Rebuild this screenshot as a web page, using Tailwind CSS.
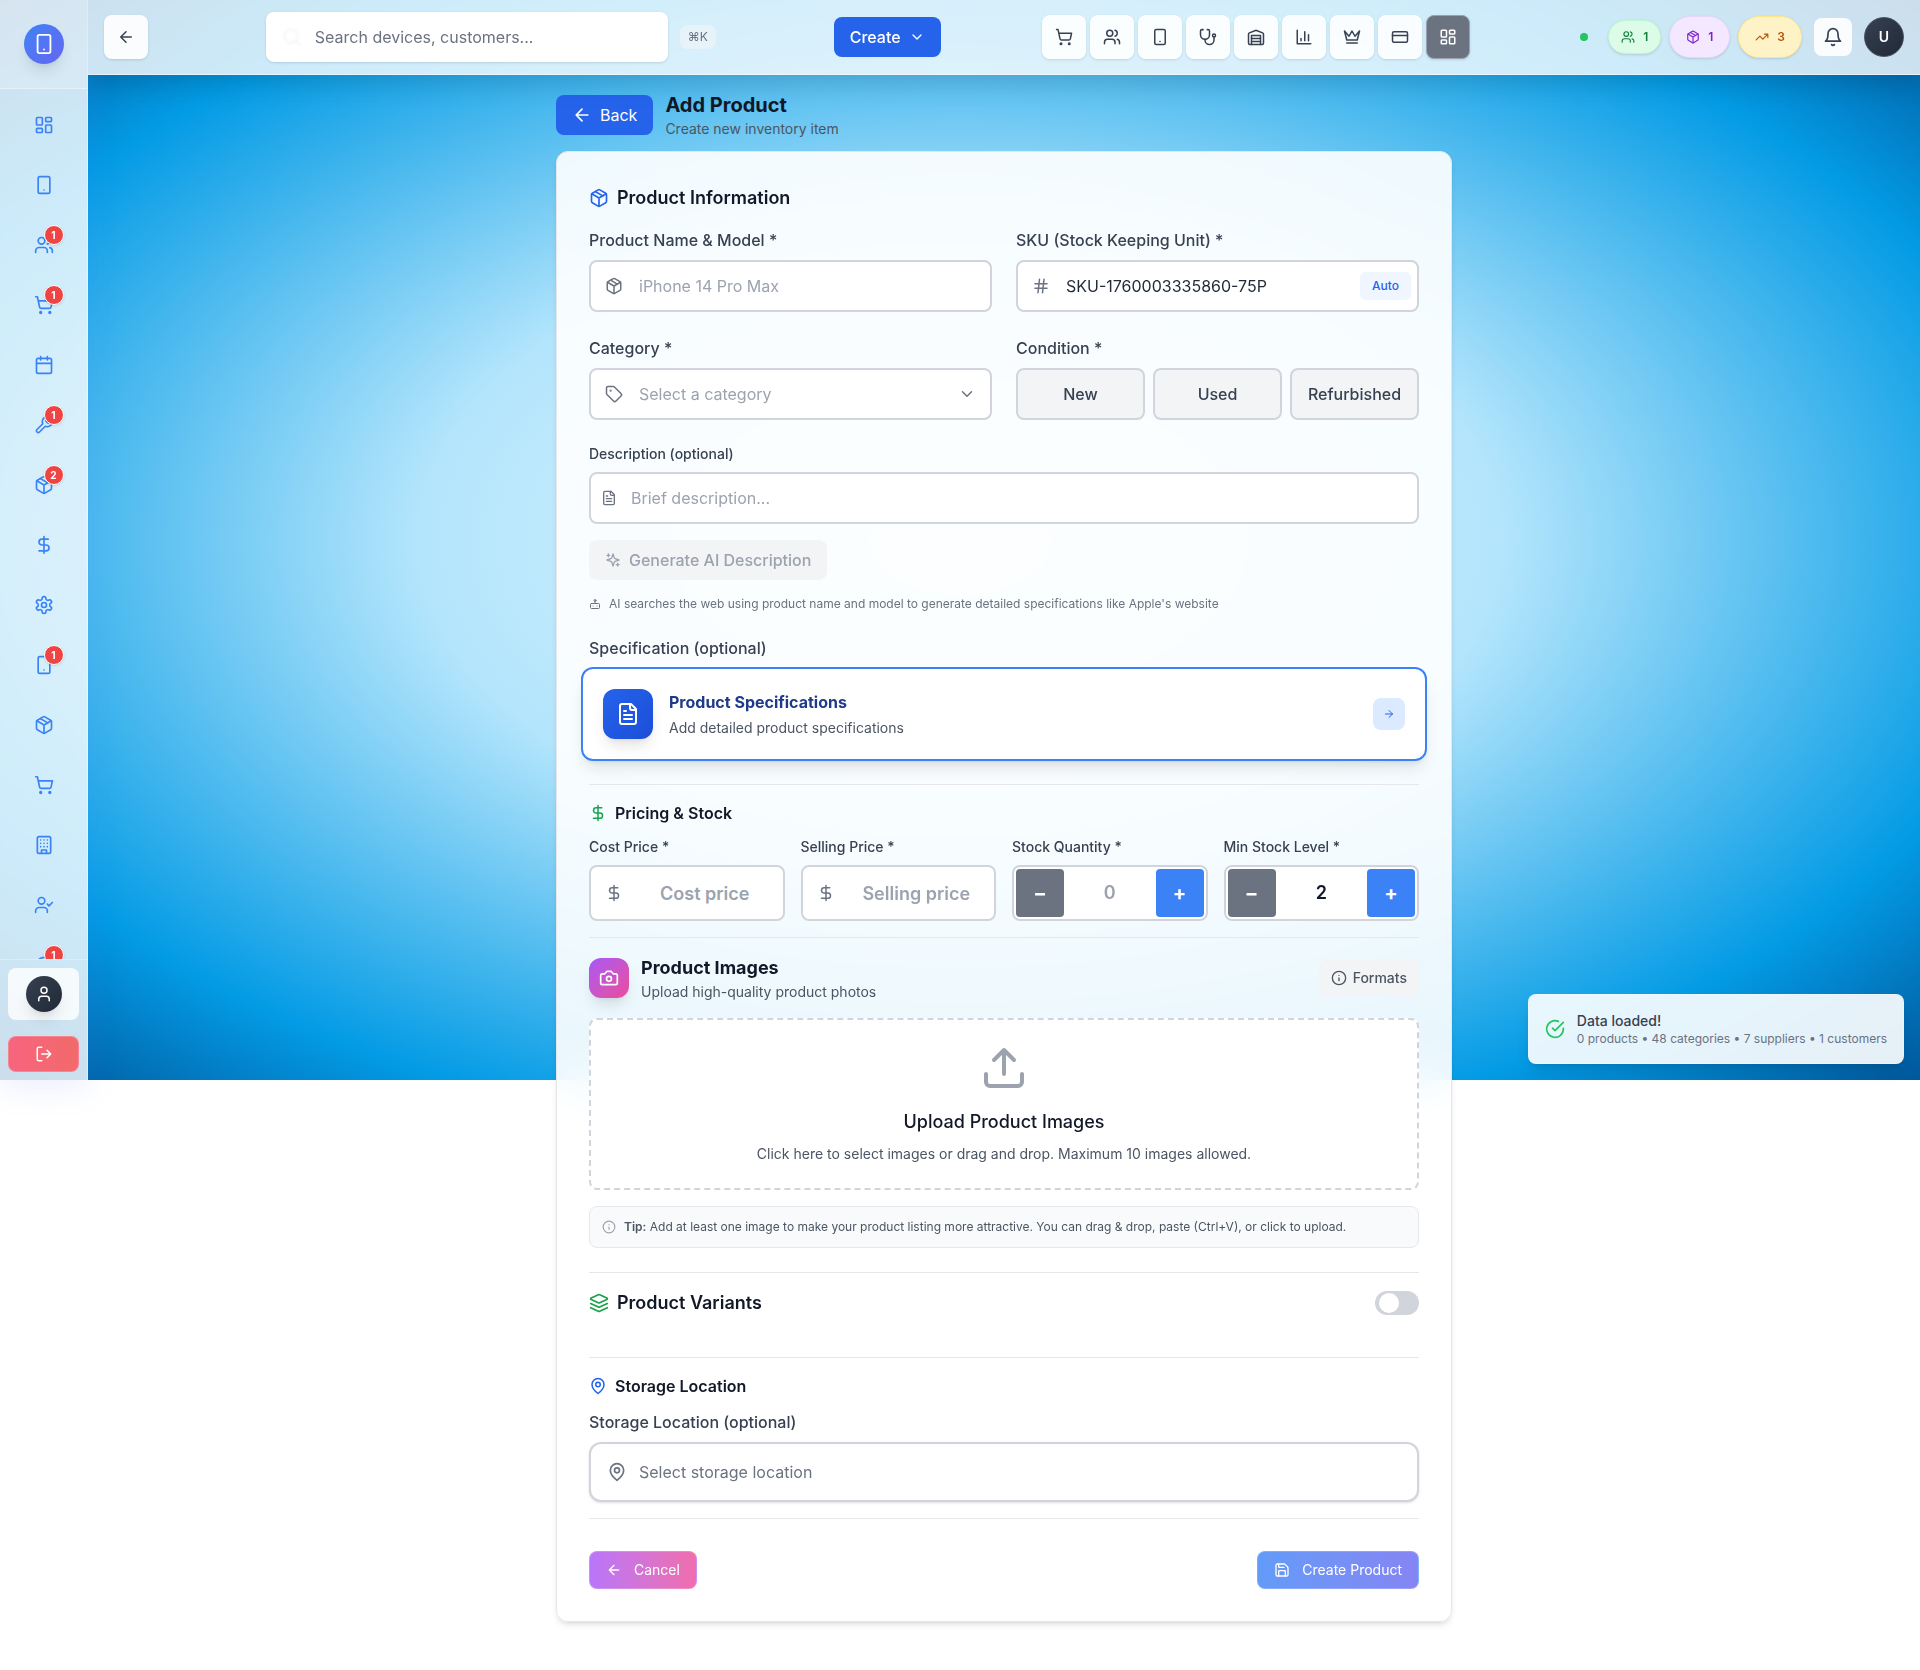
<!DOCTYPE html>
<html lang="en">
<head>
<meta charset="utf-8">
<meta name="viewport" content="width=device-width, initial-scale=1">
<title>Add Product</title>
<script src="https://cdn.jsdelivr.net/npm/@tailwindcss/browser@4"></script>
</head>
<body class="relative bg-white font-['Inter',sans-serif] text-[#111827]">

<!-- Icon sprite -->
<svg class="hidden" fill="none" stroke="currentColor" stroke-width="2" stroke-linecap="round" stroke-linejoin="round">
  <symbol id="phone" viewBox="0 0 24 24"><rect x="5" y="2" width="14" height="20" rx="2"/><path d="M12 18h.01"/></symbol>
  <symbol id="dash" viewBox="0 0 24 24"><rect x="3" y="3" width="7" height="9" rx="1"/><rect x="14" y="3" width="7" height="5" rx="1"/><rect x="14" y="12" width="7" height="9" rx="1"/><rect x="3" y="16" width="7" height="5" rx="1"/></symbol>
  <symbol id="users" viewBox="0 0 24 24"><path d="M16 21v-2a4 4 0 0 0-4-4H6a4 4 0 0 0-4 4v2"/><circle cx="9" cy="7" r="4"/><path d="M22 21v-2a4 4 0 0 0-3-3.87M16 3.13a4 4 0 0 1 0 7.75"/></symbol>
  <symbol id="cart" viewBox="0 0 24 24"><circle cx="8" cy="21" r="1"/><circle cx="19" cy="21" r="1"/><path d="M2.05 2.05h2l2.66 12.42a2 2 0 0 0 2 1.58h9.78a2 2 0 0 0 1.95-1.57l1.65-7.43H5.12"/></symbol>
  <symbol id="calendar" viewBox="0 0 24 24"><path d="M8 2v4M16 2v4"/><rect x="3" y="4" width="18" height="18" rx="2"/><path d="M3 10h18"/></symbol>
  <symbol id="wrench" viewBox="0 0 24 24"><path d="M14.7 6.3a1 1 0 0 0 0 1.4l1.6 1.6a1 1 0 0 0 1.4 0l3.77-3.77a6 6 0 0 1-7.94 7.94l-6.91 6.91a2.12 2.12 0 0 1-3-3l6.91-6.91a6 6 0 0 1 7.94-7.94l-3.76 3.76z"/></symbol>
  <symbol id="package" viewBox="0 0 24 24"><path d="m7.5 4.27 9 5.15"/><path d="M21 8a2 2 0 0 0-1-1.73l-7-4a2 2 0 0 0-2 0l-7 4A2 2 0 0 0 3 8v8a2 2 0 0 0 1 1.73l7 4a2 2 0 0 0 2 0l7-4A2 2 0 0 0 21 16Z"/><path d="m3.3 7 8.7 5 8.7-5M12 22V12"/></symbol>
  <symbol id="dollar" viewBox="0 0 24 24"><path d="M12 2v20M17 5H9.5a3.5 3.5 0 0 0 0 7h5a3.5 3.5 0 0 1 0 7H6"/></symbol>
  <symbol id="gear" viewBox="0 0 24 24"><path d="M12.22 2h-.44a2 2 0 0 0-2 2v.18a2 2 0 0 1-1 1.73l-.43.25a2 2 0 0 1-2 0l-.15-.08a2 2 0 0 0-2.73.73l-.22.38a2 2 0 0 0 .73 2.73l.15.1a2 2 0 0 1 1 1.72v.51a2 2 0 0 1-1 1.74l-.15.09a2 2 0 0 0-.73 2.73l.22.38a2 2 0 0 0 2.73.73l.15-.08a2 2 0 0 1 2 0l.43.25a2 2 0 0 1 1 1.73V20a2 2 0 0 0 2 2h.44a2 2 0 0 0 2-2v-.18a2 2 0 0 1 1-1.73l.43-.25a2 2 0 0 1 2 0l.15.08a2 2 0 0 0 2.73-.73l.22-.39a2 2 0 0 0-.73-2.73l-.15-.08a2 2 0 0 1-1-1.74v-.5a2 2 0 0 1 1-1.74l.15-.09a2 2 0 0 0 .73-2.73l-.22-.38a2 2 0 0 0-2.73-.73l-.15.08a2 2 0 0 1-2 0l-.43-.25a2 2 0 0 1-1-1.73V4a2 2 0 0 0-2-2z"/><circle cx="12" cy="12" r="3"/></symbol>
  <symbol id="building" viewBox="0 0 24 24"><rect x="4" y="2" width="16" height="20" rx="2"/><path d="M9 22v-4h6v4M8 6h.01M16 6h.01M12 6h.01M12 10h.01M12 14h.01M16 10h.01M16 14h.01M8 10h.01M8 14h.01"/></symbol>
  <symbol id="usercheck" viewBox="0 0 24 24"><path d="M16 21v-2a4 4 0 0 0-4-4H6a4 4 0 0 0-4 4v2"/><circle cx="9" cy="7" r="4"/><path d="m16 11 2 2 4-4"/></symbol>
  <symbol id="chat" viewBox="0 0 24 24"><path d="M7.9 20A9 9 0 1 0 4 16.1L2 22Z"/></symbol>
  <symbol id="user" viewBox="0 0 24 24"><path d="M19 21v-2a4 4 0 0 0-4-4H9a4 4 0 0 0-4 4v2"/><circle cx="12" cy="7" r="4"/></symbol>
  <symbol id="logout" viewBox="0 0 24 24"><path d="M9 21H5a2 2 0 0 1-2-2V5a2 2 0 0 1 2-2h4M16 17l5-5-5-5M21 12H9"/></symbol>
  <symbol id="left" viewBox="0 0 24 24"><path d="m12 19-7-7 7-7M19 12H5"/></symbol>
  <symbol id="right" viewBox="0 0 24 24"><path d="M5 12h14M12 5l7 7-7 7"/></symbol>
  <symbol id="down" viewBox="0 0 24 24"><path d="m6 9 6 6 6-6"/></symbol>
  <symbol id="search" viewBox="0 0 24 24"><circle cx="11" cy="11" r="8"/><path d="m21 21-4.3-4.3"/></symbol>
  <symbol id="steth" viewBox="0 0 24 24"><path d="M4.8 2.3A.3.3 0 1 0 5 2H4a2 2 0 0 0-2 2v5a6 6 0 0 0 6 6 6 6 0 0 0 6-6V4a2 2 0 0 0-2-2h-1a.2.2 0 1 0 .3.3"/><path d="M8 15v1a6 6 0 0 0 6 6 6 6 0 0 0 6-6v-4"/><circle cx="20" cy="10" r="2"/></symbol>
  <symbol id="warehouse" viewBox="0 0 24 24"><path d="M22 8.35V20a2 2 0 0 1-2 2H4a2 2 0 0 1-2-2V8.35A2 2 0 0 1 3.26 6.5l8-3.2a2 2 0 0 1 1.48 0l8 3.2A2 2 0 0 1 22 8.35ZM6 18h12M6 14h12"/><path d="M6 22V10h12v12"/></symbol>
  <symbol id="chart" viewBox="0 0 24 24"><path d="M3 3v18h18M18 17V9M13 17V5M8 17v-3"/></symbol>
  <symbol id="crown" viewBox="0 0 24 24"><path d="m2 4 3 12h14l3-12-6 7-4-7-4 7-6-7zM5 20h14"/></symbol>
  <symbol id="card" viewBox="0 0 24 24"><rect x="2" y="5" width="20" height="14" rx="2"/><path d="M2 10h20"/></symbol>
  <symbol id="trend" viewBox="0 0 24 24"><path d="m22 7-8.5 8.5-5-5L2 17M16 7h6v6"/></symbol>
  <symbol id="bell" viewBox="0 0 24 24"><path d="M6 8a6 6 0 0 1 12 0c0 7 3 9 3 9H3s3-2 3-9M10.3 21a1.94 1.94 0 0 0 3.4 0"/></symbol>
  <symbol id="hash" viewBox="0 0 24 24"><path d="M4 9h16M4 15h16M10 3 8 21M16 3l-2 18"/></symbol>
  <symbol id="tag" viewBox="0 0 24 24"><path d="M12.59 2.59A2 2 0 0 0 11.17 2H4a2 2 0 0 0-2 2v7.17a2 2 0 0 0 .59 1.42l8.7 8.7a2.43 2.43 0 0 0 3.42 0l6.58-6.58a2.43 2.43 0 0 0 0-3.42z"/><circle cx="7.5" cy="7.5" r=".5" fill="currentColor"/></symbol>
  <symbol id="file" viewBox="0 0 24 24"><path d="M15 2H6a2 2 0 0 0-2 2v16a2 2 0 0 0 2 2h12a2 2 0 0 0 2-2V7Z"/><path d="M14 2v4a2 2 0 0 0 2 2h4M10 9H8M16 13H8M16 17H8"/></symbol>
  <symbol id="sparkles" viewBox="0 0 24 24"><path d="m12 3-1.91 5.81a2 2 0 0 1-1.28 1.28L3 12l5.81 1.91a2 2 0 0 1 1.28 1.28L12 21l1.91-5.81a2 2 0 0 1 1.28-1.28L21 12l-5.81-1.91a2 2 0 0 1-1.28-1.28ZM5 3v4M19 17v4M3 5h4M17 19h4"/></symbol>
  <symbol id="bot" viewBox="0 0 24 24"><rect x="3" y="11" width="18" height="10" rx="2"/><circle cx="12" cy="5" r="2"/><path d="M12 7v4M8 16h.01M16 16h.01"/></symbol>
  <symbol id="camera" viewBox="0 0 24 24"><path d="M14.5 4h-5L7 7H4a2 2 0 0 0-2 2v9a2 2 0 0 0 2 2h16a2 2 0 0 0 2-2V9a2 2 0 0 0-2-2h-3z"/><circle cx="12" cy="13" r="3"/></symbol>
  <symbol id="info" viewBox="0 0 24 24"><circle cx="12" cy="12" r="10"/><path d="M12 16v-4M12 8h.01"/></symbol>
  <symbol id="upload" viewBox="0 0 24 24"><path d="M21 15v4a2 2 0 0 1-2 2H5a2 2 0 0 1-2-2v-4M17 8l-5-5-5 5M12 3v12"/></symbol>
  <symbol id="layers" viewBox="0 0 24 24"><path d="m12.83 2.18a2 2 0 0 0-1.66 0L2.6 6.08a1 1 0 0 0 0 1.83l8.58 3.91a2 2 0 0 0 1.66 0l8.58-3.9a1 1 0 0 0 0-1.83Z"/><path d="m22 17.65-9.17 4.16a2 2 0 0 1-1.66 0L2 17.65M22 12.65l-9.17 4.16a2 2 0 0 1-1.66 0L2 12.65"/></symbol>
  <symbol id="pin" viewBox="0 0 24 24"><path d="M20 10c0 6-8 12-8 12s-8-6-8-12a8 8 0 0 1 16 0Z"/><circle cx="12" cy="10" r="3"/></symbol>
  <symbol id="save" viewBox="0 0 24 24"><path d="M15.2 3a2 2 0 0 1 1.4.6l3.8 3.8a2 2 0 0 1 .6 1.4V19a2 2 0 0 1-2 2H5a2 2 0 0 1-2-2V5a2 2 0 0 1 2-2z"/><path d="M17 21v-7a1 1 0 0 0-1-1H8a1 1 0 0 0-1 1v7M7 3v4a1 1 0 0 0 1 1h7"/></symbol>
  <symbol id="check" viewBox="0 0 24 24"><path d="M22 11.08V12a10 10 0 1 1-5.93-9.14"/><path d="m9 11 3 3L22 4"/></symbol>
</svg>

<!-- Ocean backdrop with the toast pinned to its corner -->
<div class="absolute inset-x-0 top-0 h-[1080px] bg-[radial-gradient(ellipse_at_center,#e1f5fe_0%,#b3e5fc_40%,#039be5_80%,#01579b_100%)]">
  <div role="status" class="absolute right-4 bottom-4 flex items-center gap-3 rounded-lg border border-white/30 bg-white/90 p-4 shadow-lg">
    <svg class="size-5 text-[#22c55e] fill-none stroke-current stroke-2 [stroke-linecap:round] [stroke-linejoin:round]"><use href="#check"/></svg>
    <div>
      <p class="text-sm font-medium text-[#374151]">Data loaded!</p>
      <p class="text-xs text-[#6b7280]">0 products • 48 categories • 7 suppliers • 1 customers</p>
    </div>
  </div>
</div>

<div class="relative flex items-start [&_svg]:shrink-0 [&_svg]:fill-none [&_svg]:stroke-current [&_svg]:stroke-2 [&_svg]:[stroke-linecap:round] [&_svg]:[stroke-linejoin:round] pointer-events-none">

  <aside class="pointer-events-auto flex h-[1080px] w-[88px] shrink-0 flex-col border-r border-white/40 bg-white/80 shadow-[0_8px_32px_rgba(99,130,255,0.12)] backdrop-blur-xl">
    <div class="flex h-[89px] shrink-0 items-center justify-center border-b border-white/40 bg-white/20">
      <a href="#" aria-label="Home" class="flex size-10 items-center justify-center rounded-full bg-linear-to-br from-[#3b82f6] to-[#6366f1] text-white shadow-lg"><svg class="size-[22px]"><use href="#phone"/></svg></a>
    </div>
    <nav class="flex flex-1 flex-col gap-3 overflow-hidden pt-3 text-[#3b82f6] [&>a]:flex [&>a]:h-12 [&>a]:shrink-0 [&>a]:items-center [&>a]:justify-center [&_i]:absolute [&_i]:-top-[10px] [&_i]:left-[10px] [&_i]:flex [&_i]:size-5 [&_i]:items-center [&_i]:justify-center [&_i]:rounded-full [&_i]:border [&_i]:border-white [&_i]:bg-[#ef4444] [&_i]:text-[10px] [&_i]:font-bold [&_i]:text-white [&_i]:not-italic [&_i]:shadow-sm [&_span]:relative [&_svg]:size-5">
      <a href="#" aria-label="Dashboard"><svg><use href="#dash"/></svg></a>
      <a href="#" aria-label="Devices"><svg><use href="#phone"/></svg></a>
      <a href="#" aria-label="Customers"><span><svg><use href="#users"/></svg><i>1</i></span></a>
      <a href="#" aria-label="Sales"><span><svg><use href="#cart"/></svg><i>1</i></span></a>
      <a href="#" aria-label="Calendar"><svg><use href="#calendar"/></svg></a>
      <a href="#" aria-label="Repairs"><span><svg><use href="#wrench"/></svg><i>1</i></span></a>
      <a href="#" aria-label="Inventory"><span><svg><use href="#package"/></svg><i>2</i></span></a>
      <a href="#" aria-label="Finance"><svg><use href="#dollar"/></svg></a>
      <a href="#" aria-label="Settings"><svg><use href="#gear"/></svg></a>
      <a href="#" aria-label="Phones"><span><svg><use href="#phone"/></svg><i>1</i></span></a>
      <a href="#" aria-label="Stock"><svg><use href="#package"/></svg></a>
      <a href="#" aria-label="Purchases"><svg><use href="#cart"/></svg></a>
      <a href="#" aria-label="Suppliers"><svg><use href="#building"/></svg></a>
      <a href="#" aria-label="Attendance"><svg><use href="#usercheck"/></svg></a>
      <a href="#" aria-label="Messages"><span><svg><use href="#chat"/></svg><i>1</i></span></a>
    </nav>
    <div class="flex shrink-0 flex-col gap-4 border-t border-white/30 p-2">
      <button aria-label="Profile" class="flex h-[52px] items-center justify-center rounded-lg bg-white/80"><span class="flex size-9 items-center justify-center rounded-full bg-linear-to-br from-[#374151] to-[#1f2937] text-white shadow-lg"><svg class="size-[18px]"><use href="#user"/></svg></span></button>
      <button aria-label="Log out" class="flex h-9 items-center justify-center rounded-lg border border-white/20 bg-linear-to-r from-[#f7647f] to-[#f26a6a] text-white"><svg class="size-[18px]"><use href="#logout"/></svg></button>
    </div>
  </aside>

  <!-- The content column clips the header shadow so that it stays off the sidebar -->
  <div class="flex min-w-0 flex-1 flex-col overflow-x-clip">
    <header class="pointer-events-auto flex h-[75px] items-center justify-between border-b border-white/50 bg-white/80 px-4 shadow-[0_8px_24px_rgba(0,0,0,0.14)] backdrop-blur-xl">
      <button aria-label="Go back" class="flex size-11 items-center justify-center rounded-lg bg-white/90 text-[#374151] shadow-sm"><svg class="size-[18px]"><use href="#left"/></svg></button>

      <div class="mx-4 flex items-center gap-3">
        <label class="relative">
          <svg class="absolute top-1/2 left-4 size-5 -translate-y-1/2 text-[#f3f4f6] blur-[1px]"><use href="#search"/></svg>
          <input type="search" aria-label="Search" placeholder="Search devices, customers..." class="h-[50px] w-[402px] rounded-lg bg-white pr-4 pl-[49px] text-base shadow-sm placeholder:text-[#6b7280]">
        </label>
        <kbd class="rounded-lg bg-[#f3f4f6]/60 px-2 py-1 font-['Inter','DejaVu_Sans',sans-serif] text-xs text-[#6b7280]">⌘K</kbd>
      </div>

      <button class="flex h-10 items-center gap-2 rounded-lg bg-[#2563eb] px-4 text-base font-medium text-white">Create<svg class="size-4"><use href="#down"/></svg></button>

      <nav class="flex gap-1 text-[#374151] [&_svg]:size-[18px] [&>a]:flex [&>a]:size-11 [&>a]:items-center [&>a]:justify-center [&>a]:rounded-lg [&>a]:shadow-sm">
        <a href="#" aria-label="Sales" class="bg-white/90"><svg><use href="#cart"/></svg></a>
        <a href="#" aria-label="Customers" class="bg-white/90"><svg><use href="#users"/></svg></a>
        <a href="#" aria-label="Devices" class="bg-white/90"><svg><use href="#phone"/></svg></a>
        <a href="#" aria-label="Diagnostics" class="bg-white/90"><svg><use href="#steth"/></svg></a>
        <a href="#" aria-label="Warehouse" class="bg-white/90"><svg><use href="#warehouse"/></svg></a>
        <a href="#" aria-label="Reports" class="bg-white/90"><svg><use href="#chart"/></svg></a>
        <a href="#" aria-label="Premium" class="bg-white/90"><svg><use href="#crown"/></svg></a>
        <a href="#" aria-label="Payments" class="bg-white/90"><svg><use href="#card"/></svg></a>
        <a href="#" aria-label="Overview" class="border border-[#9ca3af] bg-[#6b7280] text-white"><svg><use href="#dash"/></svg></a>
      </nav>

      <div class="ml-2 flex items-center gap-3">
        <span class="mr-2 size-2 rounded-full bg-[#22c55e]"></span>
        <div class="flex items-center gap-2 text-xs font-semibold [&_svg]:size-[14px]">
          <a href="#" class="flex h-[34px] items-center gap-2 rounded-full border border-[#bbf7d0] bg-[#dcfce7] px-3 text-[#15803d] shadow-sm"><svg><use href="#users"/></svg>1</a>
          <a href="#" class="flex h-[42px] items-center gap-2 rounded-full border border-[#e9d5ff] bg-[#f3e8ff] px-4 text-[#7e22ce] shadow-sm"><svg><use href="#package"/></svg>1</a>
          <a href="#" class="flex h-[42px] items-center gap-2 rounded-full border border-[#fde68a] bg-[#fef3c7] px-4 text-[#b45309] shadow-sm"><svg><use href="#trend"/></svg>3</a>
        </div>
        <button aria-label="Notifications" class="flex size-[38px] items-center justify-center rounded-lg bg-white/90 text-[#374151]"><svg class="size-5"><use href="#bell"/></svg></button>
        <button class="size-10 rounded-full border border-[#4b5563] bg-linear-to-br from-[#374151] to-[#1f2937] text-sm font-semibold text-white">U</button>
      </div>
    </header>

    <main class="pointer-events-auto mx-auto w-full max-w-4xl pt-4 pb-12">
      <div class="mb-3 flex items-center gap-3">
        <button class="flex h-10 items-center gap-2 rounded-lg bg-[#2563eb] px-4 text-base text-white"><svg class="size-5"><use href="#left"/></svg>Back</button>
        <div>
          <h1 class="text-xl leading-7 font-bold">Add Product</h1>
          <p class="text-sm text-[#4b5563]">Create new inventory item</p>
        </div>
      </div>

      <form class="rounded-xl border border-[#e5e7eb] bg-white/90 p-8 shadow-md backdrop-blur-xl">
        <section>
          <h2 class="mb-4 flex items-center gap-2 text-lg leading-7 font-semibold"><svg class="size-5 text-[#2563eb]"><use href="#package"/></svg>Product Information</h2>

          <div class="grid grid-cols-2 gap-6 text-base text-[#374151]">
            <div>
              <label for="name" class="mb-2 block font-medium">Product Name &amp; Model *</label>
              <div class="relative">
                <svg class="absolute top-[17px] left-4 size-[18px] text-[#6b7280]"><use href="#package"/></svg>
                <input id="name" type="text" placeholder="iPhone 14 Pro Max" class="block h-13 w-full rounded-lg border-2 border-[#d1d5db] bg-white pr-4 pl-12 placeholder:text-[#9ca3af]">
              </div>
            </div>
            <div>
              <label for="sku" class="mb-2 block font-medium">SKU (Stock Keeping Unit) *</label>
              <div class="relative">
                <svg class="absolute top-[17px] left-4 size-[18px] text-[#6b7280]"><use href="#hash"/></svg>
                <input id="sku" type="text" value="SKU-1760003335860-75P" class="block h-13 w-full rounded-lg border-2 border-[#d1d5db] bg-white pr-16 pl-12 text-[#1f2937]">
                <button type="button" class="absolute top-3 right-2 h-7 rounded-md bg-[#eff6ff] px-3 text-xs font-medium text-[#2563eb]">Auto</button>
              </div>
            </div>
            <div>
              <label for="category" class="mb-2 block font-medium">Category *</label>
              <div class="relative">
                <svg class="absolute top-[17px] left-4 size-[18px] text-[#6b7280]"><use href="#tag"/></svg>
                <select id="category" class="block h-13 w-full appearance-none rounded-lg border-2 border-[#d1d5db] bg-white pr-12 pl-12 text-[#9ca3af]"><option>Select a category</option></select>
                <svg class="absolute top-[17px] right-4 size-[18px] text-[#6b7280]"><use href="#down"/></svg>
              </div>
            </div>
            <fieldset>
              <legend class="mb-2 font-medium">Condition *</legend>
              <div class="grid grid-cols-3 gap-2 font-medium">
                <button type="button" class="h-13 rounded-lg border-2 border-[#d1d5db] bg-[#f3f4f6]">New</button>
                <button type="button" class="h-13 rounded-lg border-2 border-[#d1d5db] bg-[#f3f4f6]">Used</button>
                <button type="button" class="h-13 rounded-lg border-2 border-[#d1d5db] bg-[#f3f4f6]">Refurbished</button>
              </div>
            </fieldset>
          </div>

          <label for="description" class="mt-6 mb-2 block text-sm font-medium text-[#374151]">Description (optional)</label>
          <div class="relative">
            <svg class="absolute top-[18px] left-3 size-4 text-[#6b7280]"><use href="#file"/></svg>
            <input id="description" type="text" placeholder="Brief description..." class="block h-13 w-full rounded-lg border-2 border-[#d1d5db] bg-white pr-4 pl-10 text-base placeholder:text-[#9ca3af]">
          </div>
          <button type="button" disabled class="mt-4 flex h-10 items-center gap-2 rounded-lg bg-[#f3f4f6] px-4 text-base font-medium text-[#9ca3af]"><svg class="size-4"><use href="#sparkles"/></svg>Generate AI Description</button>
          <p class="mt-4 flex items-center gap-2 text-xs text-[#6b7280]"><svg class="size-3"><use href="#bot"/></svg>AI searches the web using product name and model to generate detailed specifications like Apple's website</p>

          <h3 class="mt-6 text-base font-medium text-[#374151]">Specification (optional)</h3>
          <button type="button" class="-mx-2 mt-[7px] mb-[23px] flex w-[calc(100%+16px)] items-center gap-4 rounded-xl border-2 border-[#3b82f6] bg-white p-5 text-left shadow-lg">
            <span class="flex size-[50px] items-center justify-center rounded-xl bg-linear-to-br from-[#2563eb] to-[#1d4ed8] text-white shadow-lg"><svg class="size-6"><use href="#file"/></svg></span>
            <span class="flex flex-1 flex-col gap-1">
              <span class="text-base font-bold text-[#1e3a8a]">Product Specifications</span>
              <span class="text-sm text-[#4b5563]">Add detailed product specifications</span>
            </span>
            <span class="flex size-8 items-center justify-center rounded-lg bg-[#dbeafe] text-[#2563eb]"><svg class="size-3"><use href="#right"/></svg></span>
          </button>
        </section>

        <section class="border-t border-[#e5e7eb] py-4">
          <h2 class="mb-3 flex items-center gap-2 text-base font-semibold"><svg class="size-[18px] text-[#16a34a]"><use href="#dollar"/></svg>Pricing &amp; Stock</h2>
          <div class="grid grid-cols-4 gap-4">
            <div>
              <label for="cost" class="mb-2 block text-sm font-medium text-[#374151]">Cost Price *</label>
              <div class="relative">
                <svg class="absolute top-[19px] left-4 size-[18px] text-[#6b7280]"><use href="#dollar"/></svg>
                <input id="cost" type="text" inputmode="decimal" placeholder="Cost price" class="block h-14 w-full rounded-lg border-2 border-[#d1d5db] bg-white pr-3 pl-12 text-center text-lg font-semibold placeholder:text-[#9ca3af]">
              </div>
            </div>
            <div>
              <label for="price" class="mb-2 block text-sm font-medium text-[#374151]">Selling Price *</label>
              <div class="relative">
                <svg class="absolute top-[19px] left-4 size-[18px] text-[#6b7280]"><use href="#dollar"/></svg>
                <input id="price" type="text" inputmode="decimal" placeholder="Selling price" class="block h-14 w-full rounded-lg border-2 border-[#d1d5db] bg-white pr-3 pl-12 text-center text-lg font-semibold placeholder:text-[#9ca3af]">
              </div>
            </div>
            <div>
              <label for="quantity" class="mb-2 block text-sm font-medium text-[#374151]">Stock Quantity *</label>
              <div class="flex h-14 rounded-lg border-2 border-[#d1d5db] bg-white p-[2px]">
                <button type="button" class="w-12 shrink-0 rounded-sm bg-[#6b7280] text-xl font-bold text-white">−</button>
                <input id="quantity" type="text" inputmode="numeric" placeholder="0" class="w-0 min-w-0 flex-1 text-center text-lg font-semibold placeholder:text-[#9ca3af]">
                <button type="button" class="w-12 shrink-0 rounded-sm bg-[#3b82f6] text-xl font-bold text-white">+</button>
              </div>
            </div>
            <div>
              <label for="minimum" class="mb-2 block text-sm font-medium text-[#374151]">Min Stock Level *</label>
              <div class="flex h-14 rounded-lg border-2 border-[#d1d5db] bg-white p-[2px]">
                <button type="button" class="w-12 shrink-0 rounded-sm bg-[#6b7280] text-xl font-bold text-white">−</button>
                <input id="minimum" type="text" inputmode="numeric" value="2" class="w-0 min-w-0 flex-1 text-center text-lg font-semibold">
                <button type="button" class="w-12 shrink-0 rounded-sm bg-[#3b82f6] text-xl font-bold text-white">+</button>
              </div>
            </div>
          </div>
        </section>

        <section class="border-t border-[#e5e7eb] pt-4 pb-6">
          <div class="mb-4 flex items-center gap-3">
            <span class="flex size-10 items-center justify-center rounded-xl bg-linear-to-br from-[#a855f7] to-[#ec4899] text-white shadow-lg"><svg class="size-5"><use href="#camera"/></svg></span>
            <div class="flex-1">
              <h2 class="text-lg leading-7 font-bold">Product Images</h2>
              <p class="text-sm text-[#4b5563]">Upload high-quality product photos</p>
            </div>
            <button type="button" class="flex h-9 items-center gap-[6px] rounded-lg bg-[#f3f4f6] px-3 text-sm font-medium text-[#4b5563]"><svg class="size-4"><use href="#info"/></svg>Formats</button>
          </div>
          <label class="flex flex-col items-center rounded-lg border-2 border-dashed border-[#d1d5db] bg-white p-6">
            <input type="file" multiple accept="image/*" class="sr-only">
            <svg class="size-12 text-[#9ca3af]"><use href="#upload"/></svg>
            <span class="mt-4 text-lg leading-7 font-medium">Upload Product Images</span>
            <span class="mt-2 text-sm text-[#4b5563]">Click here to select images or drag and drop. Maximum 10 images allowed.</span>
          </label>
          <p class="mt-4 flex items-center gap-2 rounded-lg border border-[#e5e7eb] bg-[#f9fafb] p-3 text-xs text-[#4b5563]"><svg class="size-[14px] text-[#9ca3af]"><use href="#info"/></svg><span><strong class="font-semibold">Tip:</strong> Add at least one image to make your product listing more attractive. You can drag &amp; drop, paste (Ctrl+V), or click to upload.</span></p>
        </section>

        <section class="flex items-center justify-between border-t border-[#e5e7eb] pt-4 pb-10">
          <h2 class="flex items-center gap-2 text-lg leading-7 font-semibold"><svg class="size-5 text-[#16a34a]"><use href="#layers"/></svg>Product Variants</h2>
          <input type="checkbox" role="switch" aria-label="Product Variants" class="flex h-6 w-11 appearance-none items-center rounded-full bg-[#d1d5db] px-1 before:size-5 before:rounded-full before:bg-white before:content-['']">
        </section>

        <section class="border-t border-[#e5e7eb] py-4">
          <h2 class="mb-3 flex items-center gap-2 text-base font-semibold"><svg class="size-[18px] text-[#2563eb]"><use href="#pin"/></svg>Storage Location</h2>
          <label for="location" class="mb-2 block text-base font-medium text-[#374151]">Storage Location (optional)</label>
          <button id="location" type="button" class="flex h-15 w-full items-center gap-3 rounded-xl border-2 border-[#d1d5db] bg-white px-4 text-base text-[#6b7280] shadow-sm"><svg class="size-5"><use href="#pin"/></svg>Select storage location</button>
        </section>

        <div class="flex justify-between border-t border-[#e5e7eb] pt-8 text-sm text-white">
          <button type="button" class="flex h-[38px] items-center gap-3 rounded-lg border border-white/20 bg-linear-to-r from-[#b975f9] to-[#f06dad] px-4"><svg class="size-4"><use href="#left"/></svg>Cancel</button>
          <button type="submit" class="flex h-[38px] items-center gap-3 rounded-lg border border-white/20 bg-linear-to-r from-[#629bf8] to-[#8585f4] px-4"><svg class="size-4"><use href="#save"/></svg>Create Product</button>
        </div>
      </form>
    </main>
  </div>
</div>
</body>
</html>
